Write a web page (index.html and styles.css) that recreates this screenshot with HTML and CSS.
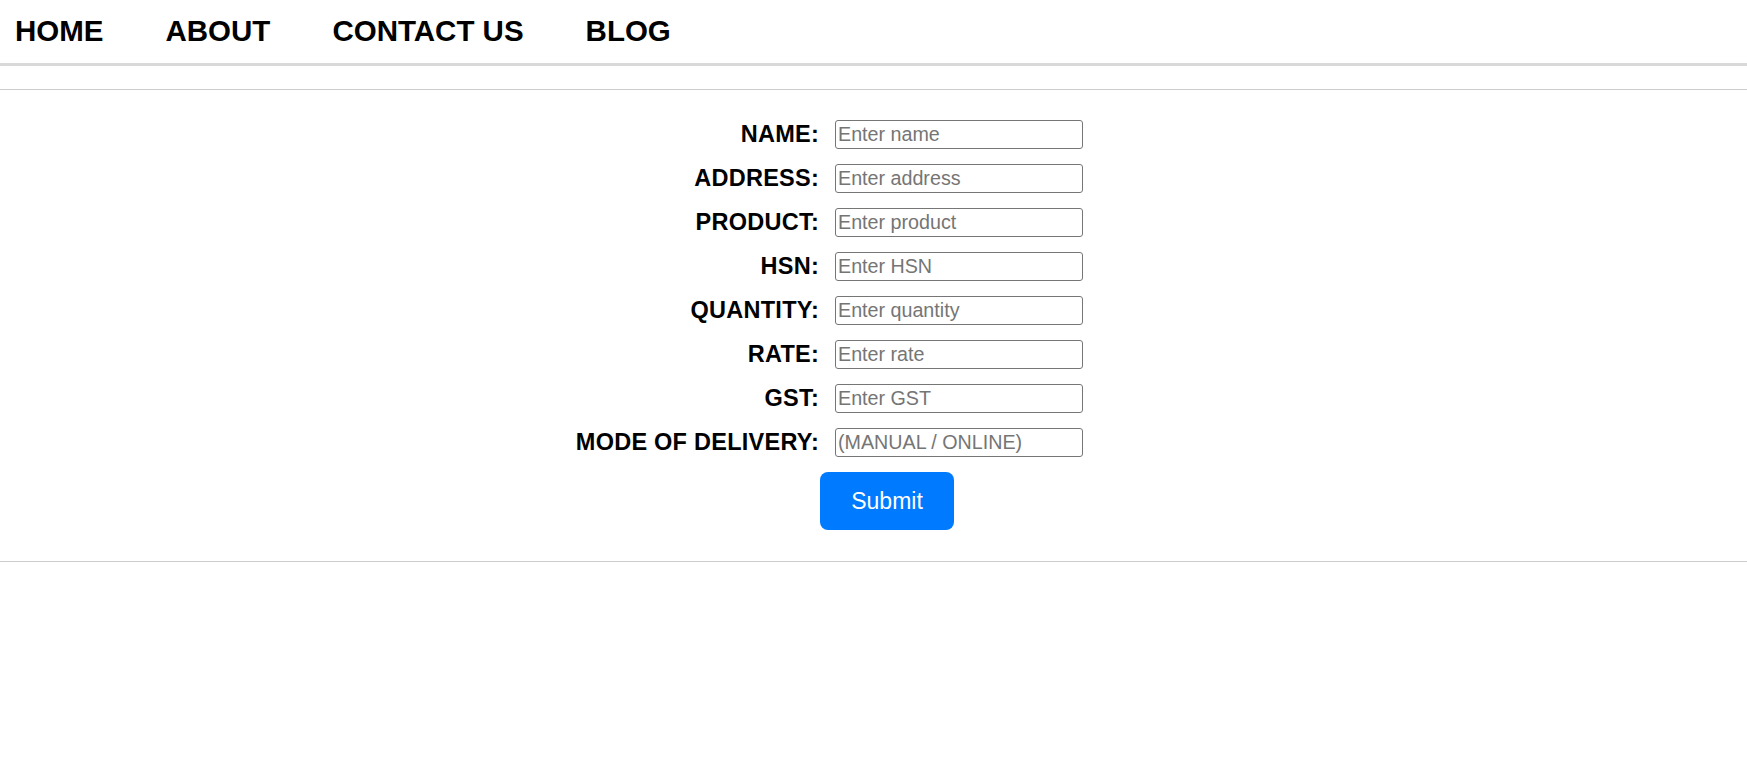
FILE: index.html
```html
<!DOCTYPE html>
<html lang="en">
<head>
<meta charset="utf-8">
<title>Order Form</title>
<link rel="stylesheet" href="styles.css">
</head>
<body>
<nav class="topnav">
  <a class="nav-link" href="#">HOME</a>
  <a class="nav-link" href="#">ABOUT</a>
  <a class="nav-link" href="#">CONTACT US</a>
  <a class="nav-link" href="#">BLOG</a>
</nav>
<section class="form-section">
  <form class="order-form">
    <label class="field-label" for="name">NAME:</label>
    <input class="field-input" id="name" type="text" placeholder="Enter name">
    <label class="field-label" for="address">ADDRESS:</label>
    <input class="field-input" id="address" type="text" placeholder="Enter address">
    <label class="field-label" for="product">PRODUCT:</label>
    <input class="field-input" id="product" type="text" placeholder="Enter product">
    <label class="field-label" for="hsn">HSN:</label>
    <input class="field-input" id="hsn" type="text" placeholder="Enter HSN">
    <label class="field-label" for="quantity">QUANTITY:</label>
    <input class="field-input" id="quantity" type="text" placeholder="Enter quantity">
    <label class="field-label" for="rate">RATE:</label>
    <input class="field-input" id="rate" type="text" placeholder="Enter rate">
    <label class="field-label" for="gst">GST:</label>
    <input class="field-input" id="gst" type="text" placeholder="Enter GST">
    <label class="field-label" for="mode">MODE OF DELIVERY:</label>
    <input class="field-input" id="mode" type="text" placeholder="(MANUAL / ONLINE)">
    <button class="submit-btn" type="submit">Submit</button>
  </form>
</section>
</body>
</html>
```
FILE: styles.css
```css
html, body {
  margin: 0;
  padding: 0;
  background: #ffffff;
  font-family: "Liberation Sans", Arial, sans-serif;
  color: #000;
}

.topnav {
  display: flex;
  gap: 62px;
  padding: 14px 0 16px 15px;
  border-bottom: 3px solid #d9d9d9;
}

.nav-link {
  font-size: 29.5px;
  line-height: 33px;
  font-weight: bold;
  color: #000;
  text-decoration: none;
}

.form-section {
  margin-top: 23px;
  border-top: 1px solid #cccccc;
  border-bottom: 1px solid #cccccc;
  padding: 30px 0 31px;
}

.order-form {
  display: grid;
  grid-template-columns: 819px 248px;
  column-gap: 16px;
  row-gap: 15px;
  align-items: center;
}

.field-label {
  text-align: right;
  font-size: 23.5px;
  font-weight: bold;
  letter-spacing: 0.25px;
  line-height: 29px;
  white-space: nowrap;
}

.field-input {
  box-sizing: border-box;
  width: 248px;
  height: 29px;
  margin: 0;
  padding: 1px 2px;
  border: 1px solid #767676;
  border-radius: 3px;
  font-family: "Liberation Sans", Arial, sans-serif;
  font-size: 19.7px;
  color: #000;
}

.field-input::placeholder {
  color: #757575;
}

.submit-btn {
  grid-column: 1 / -1;
  justify-self: start;
  margin: 0 0 0 820px;
  width: 134px;
  height: 58px;
  border: none;
  border-radius: 8px;
  background: #007bff;
  color: #fff;
  font-family: "Liberation Sans", Arial, sans-serif;
  font-size: 23px;
  cursor: pointer;
}
```
